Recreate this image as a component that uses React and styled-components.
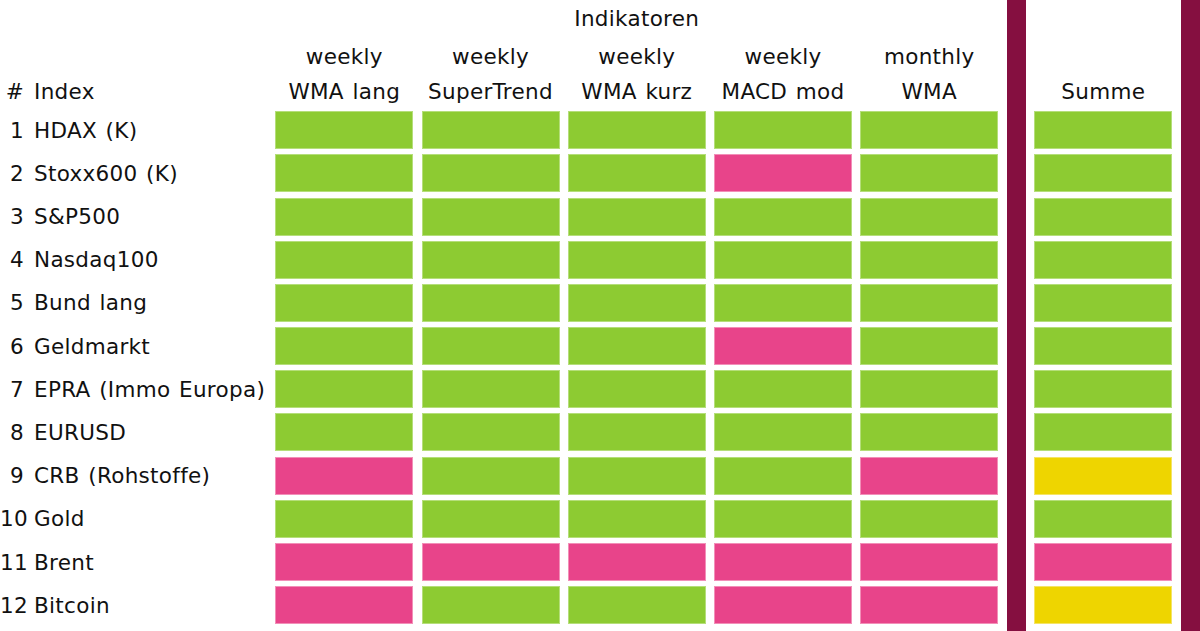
import styled, { createGlobalStyle } from "styled-components";

const GlobalStyle = createGlobalStyle`
  html, body {
    margin: 0;
    padding: 0;
    background: #ffffff;
  }
  body {
    font-family: "DejaVu Sans", "Liberation Sans", sans-serif;
    color: #111111;
  }
`;

const colors = {
  g: "#8dcb32",
  r: "#e8448a",
  y: "#eed500",
};

const borders = {
  g: "#b5de7a",
  r: "#f28fb8",
  y: "#f5e466",
};

const rows = [
  ["HDAX (K)", "ggggg", "g"],
  ["Stoxx600 (K)", "gggrg", "g"],
  ["S&P500", "ggggg", "g"],
  ["Nasdaq100", "ggggg", "g"],
  ["Bund lang", "ggggg", "g"],
  ["Geldmarkt", "gggrg", "g"],
  ["EPRA (Immo Europa)", "ggggg", "g"],
  ["EURUSD", "ggggg", "g"],
  ["CRB (Rohstoffe)", "rgggr", "y"],
  ["Gold", "ggggg", "g"],
  ["Brent", "rrrrr", "r"],
  ["Bitcoin", "rggrr", "y"],
];

const indicators = [
  ["weekly", "WMA lang"],
  ["weekly", "SuperTrend"],
  ["weekly", "WMA kurz"],
  ["weekly", "MACD mod"],
  ["monthly", "WMA"],
];

const Table = styled.div`
  display: grid;
  height: 100vh;
  grid-template-columns: 267px repeat(5, 138px) 19.5px 138px 20px;
  grid-template-rows: 36px 30px 29.6px repeat(12, 38px) 1fr;
  column-gap: 8.25px;
  row-gap: 5.2px;
  font-size: 21.5px;
  letter-spacing: 0.3px;
  word-spacing: 1.5px;
`;

const Bar = styled.div`
  grid-column: ${(p) => p.$col};
  grid-row: 1 / -1;
  background: #850f40;
`;

const Heading = styled.div`
  grid-row: ${(p) => p.$row};
  grid-column: ${(p) => p.$col};
  display: flex;
  align-items: center;
  justify-content: center;
  white-space: nowrap;
`;

const Label = styled.div`
  grid-row: ${(p) => p.$row};
  grid-column: 1;
  display: flex;
  align-items: center;
  white-space: nowrap;
`;

const Num = styled.span`
  width: 24px;
  text-align: right;
  margin-right: 10px;
  flex: none;
`;

const Cell = styled.div`
  grid-row: ${(p) => p.$row};
  grid-column: ${(p) => p.$col};
  background: ${(p) => colors[p.$v]};
  border: 1px solid ${(p) => borders[p.$v]};
`;

export default function App() {
  return (
    <>
      <GlobalStyle />
      <Table>
        <Heading $row={1} $col="2 / 7">Indikatoren</Heading>
        {indicators.map(([period, name], i) => (
          <Heading key={"p" + i} $row={2} $col={i + 2}>
            {period}
          </Heading>
        ))}
        {indicators.map(([period, name], i) => (
          <Heading key={"n" + i} $row={3} $col={i + 2}>
            {name}
          </Heading>
        ))}
        <Label $row={3}>
          <Num>#</Num>Index
        </Label>
        <Heading $row={3} $col={8}>Summe</Heading>

        {rows.map(([name, signals, sum], r) => (
          <Label key={"l" + r} $row={r + 4}>
            <Num>{r + 1}</Num>
            {name}
          </Label>
        ))}
        {rows.map(([name, signals, sum], r) =>
          signals.split("").map((v, c) => (
            <Cell key={r + "-" + c} $row={r + 4} $col={c + 2} $v={v} />
          ))
        )}
        {rows.map(([name, signals, sum], r) => (
          <Cell key={"s" + r} $row={r + 4} $col={8} $v={sum} />
        ))}

        <Bar $col={7} />
        <Bar $col={9} />
      </Table>
    </>
  );
}
